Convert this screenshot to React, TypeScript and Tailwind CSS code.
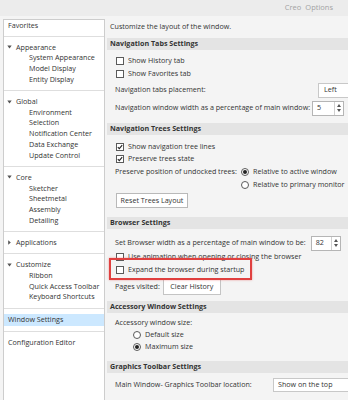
import React from "react";

function Tri({ open }: { open: boolean }) {
  return open ? (
    <svg width="5" height="4" viewBox="0 0 5 4" className="shrink-0">
      <path d="M0.3 0.6 L4.7 0.6 L2.5 3.4 Z" fill="#555" />
    </svg>
  ) : (
    <svg width="5" height="5" viewBox="0 0 5 5" className="shrink-0">
      <path d="M1.2 0.3 L3.8 2.5 L1.2 4.7 Z" fill="#555" />
    </svg>
  );
}

function Group({ title, items, open = true }: { title: string; items: string[]; open?: boolean }) {
  return (
    <div className="pt-[5px] pb-[5.6px] border-b border-[#dedede]">
      <div className="flex items-center h-[10.7px] pl-[3px] gap-[4px]">
        <Tri open={open} />
        <span>{title}</span>
      </div>
      {items.map((i) => (
        <div key={i} className="h-[10.7px] flex items-center pl-[25px]">
          <span>{i}</span>
        </div>
      ))}
    </div>
  );
}

function Cb({ checked = false }: { checked?: boolean }) {
  return (
    <span className="w-[8px] h-[8px] border border-[#5a5a5a] bg-white flex items-center justify-center shrink-0">
      {checked && (
        <svg width="6" height="6" viewBox="0 0 6 6">
          <path d="M0.8 3.1 L2.3 4.6 L5.2 1.1" stroke="#222" strokeWidth="1.1" fill="none" />
        </svg>
      )}
    </span>
  );
}

function Radio({ on = false }: { on?: boolean }) {
  return (
    <span className="w-[8px] h-[8px] rounded-full border border-[#5a5a5a] bg-white flex items-center justify-center shrink-0">
      {on && <span className="w-[4px] h-[4px] rounded-full bg-[#222]" />}
    </span>
  );
}

function Header({ children }: { children: React.ReactNode }) {
  return (
    <div className="h-[12px] bg-[#e4e4e4] flex items-center pl-[3px] font-bold text-[#333]">{children}</div>
  );
}

function Spinner({ value, w }: { value: string; w: string }) {
  return (
    <div className={`${w} h-[15px] bg-white border border-[#b5b5b5] flex`}>
      <div className="flex-1 flex items-center pl-[4px]">{value}</div>
      <div className="w-[9px] border-l border-[#d0d0d0] flex flex-col items-center justify-center gap-[2px]">
        <svg width="4" height="3" viewBox="0 0 4 3">
          <path d="M0 3 L2 0 L4 3 Z" fill="#555" />
        </svg>
        <svg width="4" height="3" viewBox="0 0 4 3">
          <path d="M0 0 L4 0 L2 3 Z" fill="#555" />
        </svg>
      </div>
    </div>
  );
}

export default function App() {
  return (
    <div className="w-[348px] h-[400px] overflow-hidden bg-[#f4f4f4] text-[#333] text-[7.15px] leading-none font-['Open_Sans',sans-serif] flex flex-col whitespace-nowrap">
      <div className="h-[16px] shrink-0 bg-[#ececec] flex items-center justify-end pr-[15px] gap-[4px] text-[#a3a3a3] text-[7.5px]">
        <span>Creo</span>
        <span>Options</span>
      </div>
      <div className="flex flex-1 pt-[3px] min-h-0 items-start">
        <div className="ml-[3px] w-[102px] shrink-0 bg-white border border-[#cdcdcd] h-[390px] flex flex-col">
          <div className="pt-[0.5px] pb-[6px] pl-[4px] h-[17px] flex items-center border-b border-[#dedede]">Favorites</div>
          <Group title="Appearance" items={["System Appearance", "Model Display", "Entity Display"]} />
          <Group
            title="Global"
            items={["Environment", "Selection", "Notification Center", "Data Exchange", "Update Control"]}
          />
          <Group title="Core" items={["Sketcher", "Sheetmetal", "Assembly", "Detailing"]} />
          <Group title="Applications" items={[]} open={false} />
          <Group title="Customize" items={["Ribbon", "Quick Access Toolbar", "Keyboard Shortcuts"]} />
          <div className="py-[5px] border-b border-[#dedede]">
            <div className="h-[12px] bg-[#cce8ff] flex items-center pl-[4px]">Window Settings</div>
          </div>
          <div className="py-[5px]">
            <div className="h-[12px] flex items-center pl-[4px]">Configuration Editor</div>
          </div>
        </div>

        <div className="ml-[2px] flex-1 min-w-0 flex flex-col">
          <div className="h-[16px] flex items-center pl-[3px]">Customize the layout of the window.</div>

          <div className="mt-[3px]">
            <Header>Navigation Tabs Settings</Header>
            <div className="pl-[8px] pt-[4px] pb-[7px]">
              <div className="h-[13px] flex items-center gap-[4px] pl-[1px]">
                <Cb />
                <span>Show History tab</span>
              </div>
              <div className="h-[13px] flex items-center gap-[4px] pl-[1px]">
                <Cb />
                <span>Show Favorites tab</span>
              </div>
              <div className="mt-[2px] h-[16px] flex items-center justify-between">
                <span>Navigation tabs placement:</span>
                <div className="w-[40px] h-[15px] -mr-[10px] bg-white border border-[#c8c8c8] flex items-center pl-[5px]">
                  Left
                </div>
              </div>
              <div className="mt-[2px] h-[16px] flex items-center">
                <span>Navigation window width as a percentage of main window:</span>
                <div className="ml-auto mr-[4px]">
                  <Spinner value="5" w="w-[32px]" />
                </div>
              </div>
            </div>
          </div>

          <div>
            <Header>Navigation Trees Settings</Header>
            <div className="pl-[8px] pt-[6px] pb-[9px]">
              <div className="h-[12px] flex items-center gap-[4px] pl-[1px]">
                <Cb checked />
                <span>Show navigation tree lines</span>
              </div>
              <div className="h-[12px] flex items-center gap-[4px] pl-[1px]">
                <Cb checked />
                <span>Preserve trees state</span>
              </div>
              <div className="mt-[0.5px] flex">
                <div className="h-[13px] flex items-center w-[126px]">Preserve position of undocked trees:</div>
                <div className="flex flex-col">
                  <div className="h-[13px] flex items-center gap-[4px]">
                    <Radio on />
                    <span>Relative to active window</span>
                  </div>
                  <div className="h-[13px] flex items-center gap-[4px]">
                    <Radio />
                    <span>Relative to primary monitor</span>
                  </div>
                </div>
              </div>
              <div className="mt-[1.5px] ml-[1px] w-[72px] h-[15px] bg-white border border-[#b9b9b9] flex items-center justify-center">
                Reset Trees Layout
              </div>
            </div>
          </div>

          <div>
            <Header>Browser Settings</Header>
            <div className="pl-[8px] pt-[7px] pb-[6px]">
              <div className="h-[14px] flex items-center">
                <span>Set Browser width as a percentage of main window to be:</span>
                <div className="ml-[5px]">
                  <Spinner value="82" w="w-[30px]" />
                </div>
              </div>
              <div className="h-[13px] flex items-center gap-[4px] pl-[1px]">
                <Cb />
                <span>Use animation when opening or closing the browser</span>
              </div>
              <div className="relative h-[13px] flex items-center gap-[4px] pl-[1px]">
                <div className="absolute left-[-6px] top-[-5px] w-[143px] h-[22px] border-2 border-[#e0403f] shadow-[0_0_2px_rgba(224,64,63,0.5)]" />
                <Cb />
                <span>Expand the browser during startup</span>
              </div>
              <div className="mt-[3px] h-[16px] flex items-center">
                <span>Pages visited:</span>
                <div className="ml-[3px] w-[58px] h-[16px] bg-white border border-[#c4c4c4] flex items-center justify-center">
                  Clear History
                </div>
              </div>
            </div>
          </div>

          <div>
            <Header>Accessory Window Settings</Header>
            <div className="pl-[8px] pt-[4px] pb-[8px]">
              <div className="h-[12px] flex items-center">Accessory window size:</div>
              <div className="h-[12px] flex items-center gap-[4px] pl-[18px]">
                <Radio />
                <span>Default size</span>
              </div>
              <div className="h-[12px] flex items-center gap-[4px] pl-[18px]">
                <Radio on />
                <span>Maximum size</span>
              </div>
            </div>
          </div>

          <div>
            <Header>Graphics Toolbar Settings</Header>
            <div className="pl-[8px] pt-[5px]">
              <div className="h-[14px] flex items-center">
                <span>Main Window- Graphics Toolbar location:</span>
                <div className="ml-auto -mr-[20px] w-[95px] h-[14px] bg-white border border-[#c8c8c8] flex items-center pl-[4px]">
                  Show on the top
                </div>
              </div>
            </div>
          </div>
        </div>
      </div>
    </div>
  );
}
